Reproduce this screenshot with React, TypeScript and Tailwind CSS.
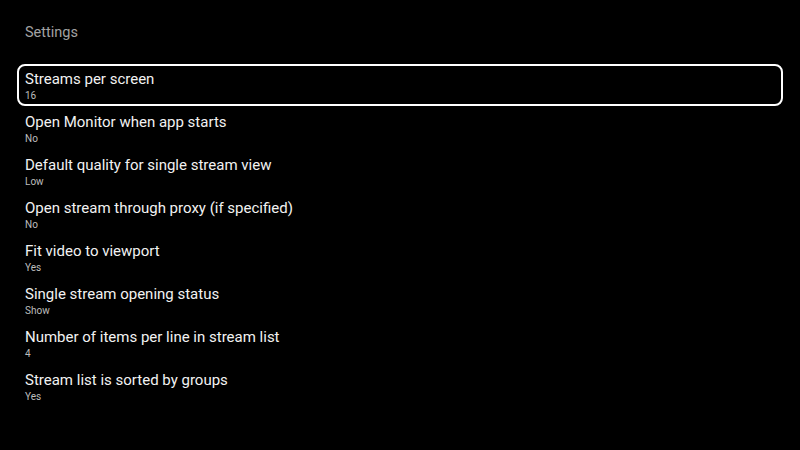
const items = [
  { title: 'Streams per screen', value: '16' },
  { title: 'Open Monitor when app starts', value: 'No' },
  { title: 'Default quality for single stream view', value: 'Low' },
  { title: 'Open stream through proxy (if specified)', value: 'No' },
  { title: 'Fit video to viewport', value: 'Yes' },
  { title: 'Single stream opening status', value: 'Show' },
  { title: 'Number of items per line in stream list', value: '4' },
  { title: 'Stream list is sorted by groups', value: 'Yes' },
];

export default function App() {
  const focused = 0;
  return (
    <div className="w-[800px] h-[450px] bg-black overflow-hidden font-['Roboto',sans-serif]">
      <div className="pl-[25px] pt-[24px] h-[64px] text-[14.5px] leading-[18px] text-[#a3a3a3]">Settings</div>
      <div className="mx-[17px] flex flex-col gap-px">
        {items.map((item, i) => (
          <div
            key={item.title}
            className={`h-[42px] rounded-[8px] border-2 px-[6px] pt-[4px] ${i === focused ? 'border-white' : 'border-transparent'}`}
          >
            <div className="text-[15px] leading-[18px] text-[#f2f2f2]">{item.title}</div>
            <div className="mt-[2px] text-[10px] leading-[12px] text-[#bdbdbd]">{item.value}</div>
          </div>
        ))}
      </div>
    </div>
  );
}
